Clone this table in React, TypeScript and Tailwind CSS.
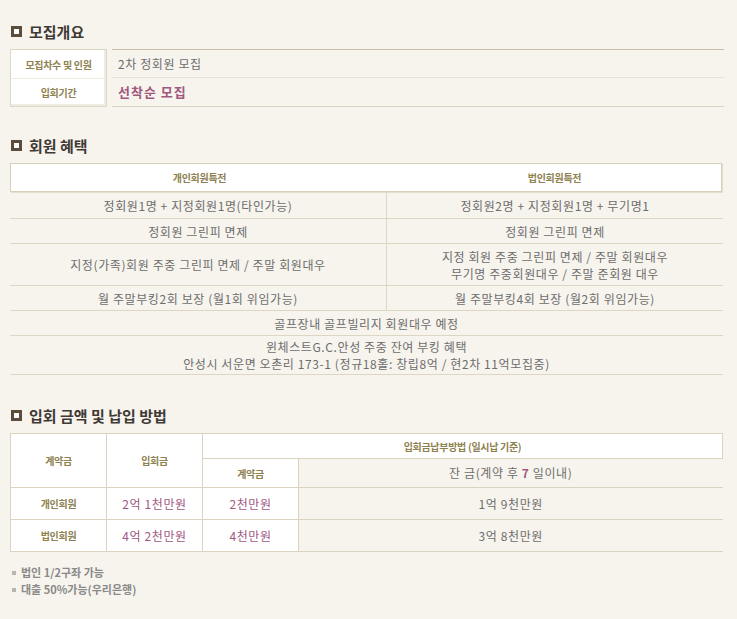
import React from "react";

const benefits: { left: string[]; right?: string[]; h: string }[] = [
  { left: ["정회원1명 + 지정회원1명(타인가능)"], right: ["정회원2명 + 지정회원1명 + 무기명1"], h: "h-[27px]" },
  { left: ["정회원 그린피 면제"], right: ["정회원 그린피 면제"], h: "h-[25px]" },
  {
    left: ["지정(가족)회원 주중 그린피 면제 / 주말 회원대우"],
    right: ["지정 회원 주중 그린피 면제 / 주말 회원대우", "무기명 주중회원대우 / 주말 준회원 대우"],
    h: "h-[42px]",
  },
  { left: ["월 주말부킹2회 보장 (월1회 위임가능)"], right: ["월 주말부킹4회 보장 (월2회 위임가능)"], h: "h-[25px]" },
  { left: ["골프장내 골프빌리지 회원대우 예정"], h: "h-[25px]" },
  {
    left: ["윈체스트G.C.안성 주중 잔여 부킹 혜택", "안성시 서운면 오촌리 173-1 (정규18홀: 창립8억 / 현2차 11억모집중)"],
    h: "h-[39px]",
  },
];

function Title({ children }: { children: React.ReactNode }) {
  return (
    <div className="flex items-center h-[22px] pl-[11px] gap-[7px]">
      <span className="w-[11px] h-[11px] bg-[#5b4c3c] flex items-center justify-center">
        <span className="w-[5px] h-[5px] bg-white" />
      </span>
      <h2 className="text-[15px] font-bold text-[#3f3a35] leading-none">{children}</h2>
    </div>
  );
}

const label = "text-[10px] font-bold tracking-[-0.3px] text-[#8d8150]";
const amount = "text-[12px] tracking-[0.6px] text-[#a0587f]";
const cellBorder = "border border-[#d9d3bf]";

export default function App() {
  return (
    <div className="min-h-screen w-[737px] bg-[#f7f4ed] pt-[20px] font-['Noto_Sans_CJK_KR','Noto_Sans',sans-serif] text-[#6d6d6d]">
      {/* 모집개요 */}
      <Title>모집개요</Title>
      <div className="mt-[7px] ml-[10px] w-[714px] grid grid-cols-[97px_1fr] gap-x-[5px]">
        <div className="bg-white border border-[#dcd7c4] shadow-[inset_-2px_-2px_0_#efece2]">
          <div className={`h-[29px] flex items-center justify-center border-b border-[#efebe0] ${label}`}>
            모집차수 및 인원
          </div>
          <div className={`h-[27px] flex items-center justify-center ${label}`}>입회기간</div>
        </div>
        <div className="border-t border-[#c9c0a7]">
          <div className="h-[28px] flex items-center pl-[6px] border-b border-[#e6e1d2] text-[12px] tracking-[0.6px]">
            2차 정회원 모집
          </div>
          <div className="h-[29px] flex items-center pl-[6px] border-b border-[#dad4c1] text-[13px] font-bold tracking-[1px] text-[#a0587f]">
            선착순 모집
          </div>
        </div>
      </div>

      {/* 회원 혜택 */}
      <div className="mt-[27px]">
        <Title>회원 혜택</Title>
      </div>
      <div className="mt-[7px] ml-[10px] w-[713px]">
        <div className="h-[29px] w-[712px] grid grid-cols-[377px_1fr] bg-white border border-[#d6d0b9] shadow-[1px_1px_0_#e2ddcc]">
          <div className={`flex items-center justify-center ${label}`}>개인회원특전</div>
          <div className={`flex items-center justify-center ${label}`}>법인회원특전</div>
        </div>
        {benefits.map((row, i) => (
          <div
            key={i}
            className={`${row.h} grid ${row.right ? "grid-cols-[377px_1fr]" : "grid-cols-1"} border-b border-[#dcd6c3] text-[12px] leading-[17px] tracking-[0.6px]`}
          >
            <div className={`flex flex-col items-center justify-center ${row.right ? "border-r border-[#dcd6c3]" : ""}`}>
              {row.left.map((t) => (
                <span key={t}>{t}</span>
              ))}
            </div>
            {row.right && (
              <div className="flex flex-col items-center justify-center">
                {row.right.map((t) => (
                  <span key={t}>{t}</span>
                ))}
              </div>
            )}
          </div>
        ))}
      </div>

      {/* 입회 금액 및 납입 방법 */}
      <div className="mt-[29px]">
        <Title>입회 금액 및 납입 방법</Title>
      </div>
      <table className="mt-[7px] ml-[10px] w-[713px] border-collapse table-fixed text-[12px] tracking-[0.6px]">
        <colgroup>
          <col className="w-[96px]" />
          <col className="w-[96px]" />
          <col className="w-[96px]" />
          <col />
        </colgroup>
        <tbody>
          <tr className="h-[25px]">
            <td rowSpan={2} className={`${cellBorder} bg-white text-center ${label}`}>계약금</td>
            <td rowSpan={2} className={`${cellBorder} bg-white text-center ${label}`}>입회금</td>
            <td colSpan={2} className={`${cellBorder} bg-white text-center ${label}`}>입회금납부방법 (일시납 기준)</td>
          </tr>
          <tr className="h-[29px]">
            <td className={`${cellBorder} bg-white text-center ${label}`}>계약금</td>
            <td className="border-b border-[#d9d3bf] text-center">
              잔 금(계약 후 <b className="text-[#a0587f]">7</b> 일이내)
            </td>
          </tr>
          <tr className="h-[32px]">
            <td className={`${cellBorder} bg-white text-center ${label}`}>개인회원</td>
            <td className={`${cellBorder} bg-white text-center ${amount}`}>2억 1천만원</td>
            <td className={`${cellBorder} bg-white text-center ${amount}`}>2천만원</td>
            <td className="border-b border-[#d9d3bf] text-center">1억 9천만원</td>
          </tr>
          <tr className="h-[32px]">
            <td className={`${cellBorder} bg-white text-center ${label}`}>법인회원</td>
            <td className={`${cellBorder} bg-white text-center ${amount}`}>4억 2천만원</td>
            <td className={`${cellBorder} bg-white text-center ${amount}`}>4천만원</td>
            <td className="border-b border-[#d9d3bf] text-center">3억 8천만원</td>
          </tr>
        </tbody>
      </table>

      <ul className="mt-[12px] pl-[12px] text-[11px] font-bold text-[#8a8a8a] leading-[17px]">
        {["법인 1/2구좌 가능", "대출 50%가능(우리은행)"].map((t) => (
          <li key={t} className="flex items-center gap-[5px]">
            <span className="w-[4px] h-[4px] bg-[#b9b6b0]" />
            {t}
          </li>
        ))}
      </ul>
    </div>
  );
}
